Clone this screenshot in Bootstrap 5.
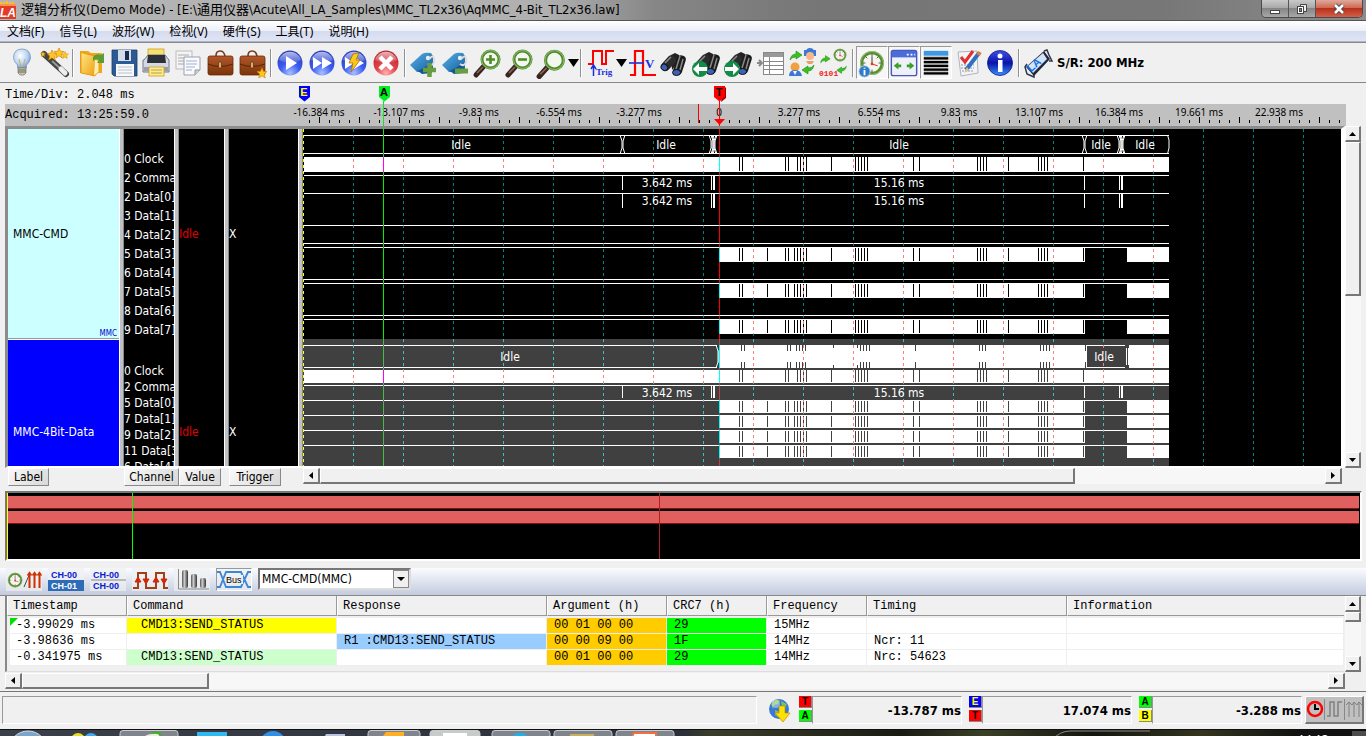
<!DOCTYPE html>
<html lang="zh-CN">
<head>
<meta charset="utf-8">
<meta name="viewport" content="width=device-width, initial-scale=1">
<title>逻辑分析仪(Demo Mode)</title>
<link href="https://cdn.jsdelivr.net/npm/bootstrap@5.3.0/dist/css/bootstrap.min.css" rel="stylesheet">
<style>
:root{--ui:"DejaVu Sans Condensed","Noto Sans","Noto Sans CJK SC",sans-serif;--mono:"Liberation Mono","Noto Sans CJK SC",monospace;--seg:"Noto Sans","Noto Sans CJK SC",sans-serif}
body{background:#f0f0f0;color:#000;font:12px/16px var(--ui);overflow:hidden}
button{font:inherit;color:inherit;padding:0;border:0;background:none}
svg{display:block;flex:none}
/* window frame */
.titlebar{height:21px;background:linear-gradient(90deg,#b4b4b4 0,#b0b0b0 40%,#868686 48%,#767676 60%,#777 85%,#8c8c8c 100%);border-bottom:1px solid #555;font:13px/20px var(--ui)}
.winbtns{height:18px;border:1px solid #4a4a4a;border-top:0;border-radius:0 0 5px 5px;overflow:hidden;margin-right:3px}
.winbtns button{background:linear-gradient(#c9c9c9,#a5a5a5 50%,#858585 50%,#a8a8a8);border-right:1px solid #555;width:27px}
.winbtns .closebtn{width:46px;border:0;background:linear-gradient(#e0a99b,#cf6a55 45%,#b8301a 50%,#d4604a)}
.menubar{height:21px;background:linear-gradient(#fdfdfe,#eef1f8 45%,#d5dcef 50%,#dfe5f5);border-top:1px solid #fff;border-bottom:1px solid #b0b4c4;gap:15px;padding-left:7px;font-family:var(--seg)}
.menubar a{color:#000;text-decoration:none}
.tools{height:41px;border-top:1px solid #888;border-bottom:1px solid #888;padding-left:6px}
.tools button{width:32px;height:34px;display:flex;align-items:center;justify-content:center}
.tools .drop{width:10px}
.tools .pressed{border:1px solid #999;border-right-color:#fff;border-bottom-color:#fff;background:#f6f6f6;height:33px}
.vsep{width:6px;height:28px;background:linear-gradient(90deg,transparent 2px,#909090 2px,#909090 3px,#fff 3px,#fff 4px,transparent 4px)}
.rate{font:bold 13px/16px var(--ui);padding-left:3px}
/* ruler */
.ruler{height:43px;padding-left:5px}
.infobox{width:280px;font:12px/20px var(--mono)}
.infobox div+div{background:#c0c0c0;height:22px;line-height:22px}
.infobox div:first-child{height:21px;line-height:25px}
.scale-host{flex:1;overflow:hidden;margin-right:20px;background:linear-gradient(#f0f0f0 21px,#c0c0c0 21px)}
/* waveform */
.viewer{margin-left:5px;margin-right:5px}
.wave-frame{flex:1;min-width:0;border:3px solid #8c8c8c;border-right:4px solid #fff;border-bottom:2px solid #fff;height:342px;background:#000;overflow:hidden}
.split{width:5px;background:linear-gradient(90deg,#fff 1px,#c0c0c0 1px,#c0c0c0 4px,#888 4px);flex:none}
.sect1{height:210px}
.sect2{height:184px;margin-top:1px}
.wcol{background:#000;color:#fff;flex:none;overflow:hidden}
.w-label{width:111px;background:#fff}
.w-chan{width:50px}.w-val{width:45px}.w-trig{width:69px}
.w-label>div{display:flex;align-items:center;padding-left:5px;position:relative}
.w-label .sect1{background:#cff;color:#000;border-bottom:1px solid #999}
.w-label .sect2{background:#00f;color:#fff}
.kind{position:absolute;right:2px;bottom:0;font-size:8px;line-height:8px;color:#00c}
.w-chan div div{white-space:nowrap}
.w-chan .sect1{padding-top:21px;line-height:19px}
.w-chan .sect2{padding-top:23px;line-height:16px}
.w-val .sect1,.w-val .sect2,.w-trig .sect1,.w-trig .sect2{display:flex;align-items:center}
.w-val{color:#e00000}
.wave-host{flex:1;overflow:hidden;min-width:0}
.hbtns{height:18px;margin-left:8px;margin-right:24px}
.hbtns .tab3d{border:1px solid #fff;border-right-color:#888;border-bottom-color:#888;background:linear-gradient(135deg,#f8f8f8,#d8d8d8);height:18px;line-height:15px}
.slot{flex:none}
/* scroll bars */
.sb{background:#f7f7f7;display:flex;flex:none}
.sb button,.sb .thumb{border:1px solid #fff;border-right:2px solid #777;border-bottom:2px solid #777;background:#f0f0f0;flex:none;display:flex;align-items:center;justify-content:center}
.sb-v{width:16px;flex-direction:column}
.sb-v button{height:16px;width:16px}
.sb-v .thumb{width:16px}
.sb-h{height:16px}
.sb-h button{width:17px;height:16px}
.sb-h .thumb{height:16px}
.rest{flex:1}
/* overview */
.overview{margin:5px 4px 0 5px;border:2px solid #777;border-right-color:#fff;border-bottom-color:#fff;height:70px;background:#000;position:relative;padding:3px 1px 0 1px}
.ovbar{height:13px;background:#e06060;border-bottom:1px solid #8b1010;margin-bottom:2px}
.ovline{position:absolute;top:0;bottom:0;width:1px}
/* decode strip */
.strip{margin-top:7px;height:28px;background:linear-gradient(#fafcff,#e4e8f2 40%,#c3cbdd);padding-left:6px;gap:6px;border-bottom:1px solid #888}
.strip button{width:36px;height:23px;display:flex;align-items:center;background:#f0f0f0b0}
.strip .pressed{border:1px solid #999;border-right-color:#fff;border-bottom-color:#fff}
.cbx{position:relative;width:153px}
.cbx select{appearance:none;width:153px;height:22px;border:2px solid #777;border-right-color:#ddd;border-bottom-color:#ddd;background:#fff;border-radius:0;padding:0 0 0 2px;font:12px/16px var(--ui);color:#000}
.cbx svg{position:absolute;right:2px;top:2px;pointer-events:none}
.grid-wrap{margin-left:5px;margin-right:5px}
.grid-frame{flex:1;min-width:0;height:76px;border-left:2px solid #888;border-bottom:1px solid #ddd;margin-right:1px;overflow:hidden}
.dtab{width:100%;table-layout:fixed;border-collapse:separate;border-spacing:0;font:12px/15px var(--mono);white-space:nowrap}
.dtab th{font-weight:400;height:20px;border-right:1px solid #999;border-left:1px solid #fff;border-bottom:1px solid #999;padding:2px 0 0 5px;text-align:left;background:#f0f0f0}
.dtab td{height:16px;padding:0 0 0 7px;background:#fff;border-right:1px solid #eee;border-bottom:1px solid #eee;line-height:15px}
.dtab td:first-child{border-left:3px solid #f0f0f0;padding-left:6px;position:relative}
.dtab th:last-child{border-right:0}
.dtab tbody tr:first-child td{border-top:2px solid #f0f0f0}
.dtab .cy{background:#ff0;padding-left:14px}.dtab .cg{background:#cfc;padding-left:14px}
.dtab .cb{background:#9cf}.dtab .co{background:#fc0}.dtab .cl{background:#0f0}
.flag::before{content:"";position:absolute;left:0;top:0;border-top:8px solid #00e000;border-right:8px solid transparent}
/* status bar */
.status{margin-top:2px;border-top:1px solid #777;height:38px;padding:4px 2px 4px 2px}
.pane{border:1px solid #999;border-right-color:#fff;border-bottom-color:#fff;height:28px;font:bold 13px/28px var(--ui);text-align:right}
.w-pane{width:150px}
.duo{width:13px;font:bold 10px/12px "Liberation Sans",sans-serif;text-align:center}
.pane+.duo{margin-left:7px}
.duo div{height:12px;border-right:1px solid #888;border-bottom:1px solid #888}
.duo div+div{margin-top:2px}
.modes{background:#c0c0c0;border:1px solid #fff;border-right:2px solid #777;border-bottom:2px solid #777;width:59px;height:28px;margin-left:3px}
.taskbar{flex:1;min-height:0;overflow:hidden;background:linear-gradient(90deg,#3a3f4a,#2b2f38 50%,#3b3d2a 52%,#1a1a14 66%,#3a4026 72%,#14140f 80%,#33351f 88%,#111 95%);border-top:1px solid #111}
</style>
<script src="https://cdn.jsdelivr.net/npm/bootstrap@5.3.0/dist/js/bootstrap.bundle.min.js"></script>
</head>
<body class="d-flex flex-column vh-100">
<svg class="position-absolute" width="0" height="0" aria-hidden="true">
<defs>
<radialGradient id="gBlue" cx=".5" cy=".9" r=".9"><stop offset="0" stop-color="#a8c0ff"/><stop offset=".45" stop-color="#3c5cf0"/><stop offset="1" stop-color="#2a3cb8"/></radialGradient>
<radialGradient id="gRed" cx=".5" cy=".9" r=".9"><stop offset="0" stop-color="#ffb0b0"/><stop offset=".45" stop-color="#e04048"/><stop offset="1" stop-color="#b82430"/></radialGradient>
<linearGradient id="gGloss" x2="0" y2="1"><stop offset="0" stop-color="#fff" stop-opacity=".65"/><stop offset="1" stop-color="#fff" stop-opacity=".1"/></linearGradient>
<linearGradient id="gTag" x2="1" y2="1"><stop offset="0" stop-color="#5ab0ea"/><stop offset="1" stop-color="#14609c"/></linearGradient>
<linearGradient id="gBrown" x2="0" y2="1"><stop offset="0" stop-color="#b0592c"/><stop offset="1" stop-color="#7c3208"/></linearGradient>
<linearGradient id="gGold" x2="1" y2="1"><stop offset="0" stop-color="#ffe88a"/><stop offset="1" stop-color="#f0a010"/></linearGradient>
<linearGradient id="gInfo" x2="0" y2="1"><stop offset="0" stop-color="#4050e8"/><stop offset=".5" stop-color="#0a14a8"/><stop offset="1" stop-color="#3a90ff"/></linearGradient>
<radialGradient id="gBulb" cx=".4" cy=".35" r=".7"><stop offset="0" stop-color="#fff"/><stop offset=".6" stop-color="#b8d4f4"/><stop offset="1" stop-color="#6c92cc"/></radialGradient>
<linearGradient id="gCyl"><stop offset="0" stop-color="#555"/><stop offset=".4" stop-color="#ccc"/><stop offset="1" stop-color="#333"/></linearGradient>
<g id="bag"><path d="M12 9Q12 4 16 4T21 9" fill="none" stroke="#7c3a18" stroke-width="1.6"/><rect x="4" y="9" width="25" height="19" rx="2" fill="url(#gBrown)" stroke="#6a2c08" stroke-width=".8"/><path d="M4 17Q16 22 29 17" fill="none" stroke="#5a2404"/><rect x="14.500" y="15" width="3" height="6" rx="1" fill="#d8a878" stroke="#502000" stroke-width=".6"/></g>
<g id="orb"><circle cx="16" cy="16" r="12.500"/><path d="M5 13A11.500 11.500 0 0 1 27 13Q16 19 5 13Z" fill="url(#gGloss)"/></g>
<g id="tagshape"><path d="M2 18L14 7Q17 5 23 6L25 9V24L22 25H9Z" fill="url(#gTag)"/><path d="M10 24L14 27 24 26V16Z" fill="#0f5a94"/><circle cx="20" cy="11" r="2.200" fill="#eee"/><path d="M21 12Q27 6 26 15Q24 20 20 17" fill="none" stroke="#ddd" stroke-width="2"/></g>
<g id="mag"><path d="M4 28L12 19" stroke="#3a2420" stroke-width="5" stroke-linecap="round"/><path d="M5 26L11 20" stroke="#8a6a60" stroke-width="1.500"/><circle cx="18.500" cy="12.500" r="8.500" fill="#f2f8ee" stroke="#4f8a2c" stroke-width="3"/><circle cx="18.500" cy="12.500" r="9" fill="none" stroke="#9cc878" stroke-width=".8"/></g>
<g id="bino"><path d="M13 8L17 6 21 8 22 13 14 23Z" fill="#222"/><rect x="6" y="7" width="9" height="17" rx="4" transform="rotate(42 10 16)" fill="#2c2c2c"/><rect x="17" y="8" width="9" height="20" rx="4" transform="rotate(18 21 18)" fill="#1c1c1c"/><path d="M13 10L7 16M22 9L18 22M25 12L22 23" stroke="#8a8a8a" stroke-width="1.500"/><ellipse cx="6.500" cy="20" rx="3.500" ry="3" fill="#3c62b8" stroke="#111" transform="rotate(40 6 20)"/><ellipse cx="18.500" cy="25.500" rx="4" ry="3" fill="#3c62b8" stroke="#111"/></g>
<g id="clockface"><circle cx="16" cy="16" r="11" fill="#f6f6f0" stroke="#5a8e34" stroke-width="3.500"/><circle cx="16" cy="16" r="12.300" fill="none" stroke="#a4cc80" stroke-width=".8"/><path d="M16 6V9M16 23V26M6 16H9M23 16H26M9 9L11 11M23 9L21 11" stroke="#555"/><path d="M16 17V9" stroke="#333"/><path d="M16 17L22 19" stroke="#d22"/><circle cx="16" cy="17" r="1.500" fill="#e33"/></g>
<path id="arrG" d="M2 11Q3 5 8 5V2L14 6L8 10V8Q4 8 2 11Z" fill="#3cc020" stroke="#1f8a10" stroke-width=".6"/>
<path id="star5" d="M0-5L1.500-1.600 5-1.500 2.300 1 3.200 5 0 2.800-3.200 5-2.300 1-5-1.500-1.500-1.600Z" fill="#ffc820" stroke="#d88800" stroke-width=".7"/>
</defs></svg>

<header class="titlebar d-flex align-items-center flex-shrink-0">
 <svg width="17" height="18" viewBox="0 0 17 18"><rect x="0" y="3" width="16" height="15" fill="#e43a28"/><path d="M1 3V1M4 3V1M7 3V0M10 3V1M13 3V1" stroke="#ffc020" stroke-width="2"/><rect x="0" y="3" width="16" height="2" fill="#ff9050"/><text x="0" y="16" font-family="Liberation Sans" font-size="12" font-weight="bold" font-style="italic" fill="#fff">LA</text></svg>
 <span class="ms-1 text-nowrap">逻辑分析仪(Demo Mode) - [E:\通用仪器\Acute\All_LA_Samples\MMC_TL2x36\AqMMC_4-Bit_TL2x36.law]</span>
 <div class="winbtns d-flex ms-auto align-self-start">
  <button aria-label="Minimize"><svg class="mx-auto" width="12" height="14"><rect x="1.500" y="8.500" width="9" height="3" fill="#fff" stroke="#444"/></svg></button>
  <button aria-label="Restore"><svg class="mx-auto" width="14" height="14"><path d="M5.500 2.500H11.500V9.500H5.500Z" fill="#eee" stroke="#444"/><rect x="2.500" y="4.500" width="6" height="7" fill="#fff" stroke="#444"/><rect x="4.500" y="6.500" width="2" height="3" fill="#888" stroke="#444"/></svg></button>
  <button class="closebtn" aria-label="Close"><svg class="mx-auto" width="14" height="14" viewBox="0 0 14 14"><path d="M3 3L11 11M11 3L3 11" stroke="#444" stroke-width="4.500"/><path d="M3 3L11 11M11 3L3 11" stroke="#fff" stroke-width="2.600"/></svg></button>
 </div>
</header>
<nav class="menubar d-flex align-items-center flex-shrink-0"><a href="#">文档(F)</a><a href="#">信号(L)</a><a href="#">波形(W)</a><a href="#">检视(V)</a><a href="#">硬件(S)</a><a href="#">工具(T)</a><a href="#">说明(H)</a></nav>

<div class="tools d-flex align-items-center flex-shrink-0" id="tools"></div>

<div class="ruler d-flex flex-shrink-0">
 <div class="infobox flex-shrink-0"><div>Time/Div: 2.048 ms</div><div>Acquired: 13:25:59.0</div></div>
 <div class="scale-host" id="scale"></div>
</div>

<main class="viewer d-flex flex-shrink-0">
 <div class="wave-frame d-flex">
  <div class="wcol w-label"><div class="sect1">MMC-CMD<span class="kind">MMC</span></div><div class="sect2">MMC-4Bit-Data</div></div>
  <div class="split"></div>
  <div class="wcol w-chan"><div class="sect1"><div>0 Clock</div><div>2 Command</div><div>2 Data[0]</div><div>3 Data[1]</div><div>4 Data[2]</div><div>5 Data[3]</div><div>6 Data[4]</div><div>7 Data[5]</div><div>8 Data[6]</div><div>9 Data[7]</div></div>
  <div class="sect2"><div>0 Clock</div><div>2 Command</div><div>5 Data[0]</div><div>7 Data[1]</div><div>9 Data[2]</div><div>11 Data[3]</div><div>6 Data[4]</div></div></div>
  <div class="split"></div>
  <div class="wcol w-val"><div class="sect1">Idle</div><div class="sect2">Idle</div></div>
  <div class="split"></div>
  <div class="wcol w-trig"><div class="sect1">X</div><div class="sect2">X</div></div>
  <div class="split"></div>
  <div class="wave-host" id="wave"></div>
 </div>
 <div class="sb sb-v"><button aria-label="Up"><svg width="7" height="4"><path d="M0 4L3.500 0 7 4Z"/></svg></button><div class="thumb" style="height:154px"></div><div class="rest"></div><button aria-label="Down"><svg width="7" height="4"><path d="M0 0L3.500 4 7 0Z"/></svg></button></div>
</main>
<div class="hbtns d-flex flex-shrink-0">
 <div class="slot" style="width:116px"><button class="tab3d" style="width:41px">Label</button></div>
 <button class="tab3d" style="width:55px">Channel</button>
 <div class="slot" style="width:50px"><button class="tab3d" style="width:42px">Value</button></div>
 <div class="slot" style="width:74px"><button class="tab3d" style="width:52px">Trigger</button></div>
 <div class="sb sb-h flex-grow-1"><button aria-label="Left"><svg width="4" height="7"><path d="M4 0L0 3.500 4 7Z"/></svg></button><div class="thumb" style="width:755px"></div><div class="rest"></div><button aria-label="Right"><svg width="4" height="7"><path d="M0 0L4 3.500 0 7Z"/></svg></button></div>
</div>

<section class="overview flex-shrink-0">
 <div class="ovbar"></div><div class="ovbar"></div>
 <div class="ovline" style="left:0;background:#ff0"></div>
 <div class="ovline" style="left:9.26%;background:#0f0"></div>
 <div class="ovline" style="left:48.2%;background:#b02020"></div>
</section>

<div class="strip d-flex align-items-start flex-shrink-0">
 <button aria-label="Clock and edges"><svg width="36" height="23" viewBox="0 0 36 23"><use href="#clockface" transform="translate(0 3) scale(.57)"/><path d="M24 5L18 19" stroke="#444"/><path d="M23.500 20V6M28.500 20V6M33.500 20V6" stroke="#d03000" stroke-width="2"/><path d="M21.500 7.500L23.500 4.500 25.500 7.500M26.500 7.500L28.500 4.500 30.500 7.500M31.500 7.500L33.500 4.500 35.500 7.500" fill="none" stroke="#d03000" stroke-width="1.500"/></svg></button>
 <button aria-label="Channel select"><svg width="36" height="23" viewBox="0 0 36 23"><rect y="12" width="36" height="11" fill="#2f6cb8"/><text x="3" y="10" font-family="Liberation Sans" font-size="9" font-weight="bold" fill="#0a1ad0">CH-00</text><text x="3" y="21" font-family="Liberation Sans" font-size="9" font-weight="bold" fill="#fff">CH-01</text></svg></button>
 <button aria-label="Channel compare"><svg width="36" height="23" viewBox="0 0 36 23"><path d="M1 12H36" stroke="#888"/><text x="3" y="10" font-family="Liberation Sans" font-size="9" font-weight="bold" fill="#0a1ad0">CH-00</text><text x="3" y="21" font-family="Liberation Sans" font-size="9" font-weight="bold" fill="#0a1ad0">CH-00</text></svg></button>
 <button aria-label="Edges"><svg width="36" height="23" viewBox="0 0 36 23"><path d="M1 20H6V5H14V20H24V5H32V20H36" fill="none" stroke="#a04018" stroke-width="2"/><path d="M3 14L6 9 9 14ZM21 14L24 9 27 14ZM11 11L14 16 17 11ZM29 11L32 16 35 11Z" fill="#d02808" stroke="#d02808"/></svg></button>
 <button aria-label="Statistics"><svg width="36" height="23" viewBox="0 0 36 23"><path d="M4.500 1V21H35" stroke="#888" fill="none"/><rect x="8" y="2" width="6" height="18" rx="2" fill="url(#gCyl)"/><rect x="17" y="6" width="6" height="14" rx="2" fill="url(#gCyl)"/><rect x="26" y="10" width="6" height="10" rx="2" fill="url(#gCyl)"/></svg></button>
 <button class="pressed" aria-label="Bus"><svg width="34" height="21" viewBox="0 0 34 21"><path d="M0 3H3L9 18H24L31 3H34M0 18H3L9 3H24L31 18H34" fill="none" stroke="#3a86d8" stroke-width="1.800"/><rect x="9" y="6" width="17" height="9" fill="#f0f0f0"/><text x="9" y="14" font-family="Liberation Sans" font-size="9" fill="#000">Bus</text></svg></button>
 <div class="cbx"><select aria-label="Bus"><option>MMC-CMD(MMC)</option></select><svg width="16" height="18"><rect x=".5" y=".5" width="15" height="17" fill="#f0f0f0" stroke="#888"/><path d="M4 7H12L8 11Z"/></svg></div>
</div>

<div class="grid-wrap d-flex flex-shrink-0">
 <div class="grid-frame">
 <table class="dtab"><colgroup><col style="width:120px"><col style="width:210px"><col style="width:210px"><col style="width:120px"><col style="width:100px"><col style="width:100px"><col style="width:200px"><col></colgroup>
 <thead><tr><th>Timestamp</th><th>Command</th><th>Response</th><th>Argument (h)</th><th>CRC7 (h)</th><th>Frequency</th><th>Timing</th><th>Information</th></tr></thead>
 <tbody>
 <tr><td class="flag">-3.99029 ms</td><td class="cy">CMD13:SEND_STATUS</td><td></td><td class="co">00 01 00 00</td><td class="cl">29</td><td>15MHz</td><td></td><td></td></tr>
 <tr><td>-3.98636 ms</td><td></td><td class="cb">R1 :CMD13:SEND_STATUS</td><td class="co">00 00 09 00</td><td class="cl">1F</td><td>14MHz</td><td>Ncr: 11</td><td></td></tr>
 <tr><td>-0.341975 ms</td><td class="cg">CMD13:SEND_STATUS</td><td></td><td class="co">00 01 00 00</td><td class="cl">29</td><td>14MHz</td><td>Nrc: 54623</td><td></td></tr>
 </tbody></table>
 </div>
 <div class="sb sb-v"><button aria-label="Up"><svg width="7" height="4"><path d="M0 4L3.500 0 7 4Z"/></svg></button><div class="thumb" style="height:10px"></div><div class="rest"></div><button aria-label="Down"><svg width="7" height="4"><path d="M0 0L3.500 4 7 0Z"/></svg></button></div>
</div>
<div class="sb sb-h" style="margin:1px 21px 0 5px"><button aria-label="Left"><svg width="4" height="7"><path d="M4 0L0 3.500 4 7Z"/></svg></button><div class="thumb" style="width:187px"></div><div class="rest"></div><button aria-label="Right"><svg width="4" height="7"><path d="M0 0L4 3.500 0 7Z"/></svg></button></div>

<footer class="status d-flex flex-shrink-0">
 <div class="pane flex-grow-1"></div>
 <svg class="mx-2" width="26" height="28" viewBox="0 0 26 28"><circle cx="14" cy="13" r="10" fill="#3a78d8"/><path d="M6 8Q10 3 15 4L13 8 9 9 8 13ZM16 5L22 8 20 12 17 11ZM10 14L15 16 13 21 10 19Z" fill="#7cc060"/><circle cx="11" cy="8" r="4" fill="#fff" opacity=".4"/><path d="M14 10H20V17H25L18 26 10 17H14Z" fill="#ffe000" stroke="#b89000" stroke-width=".7"/></svg>
 <div class="duo"><div style="background:#f00">T</div><div style="background:#0f0">A</div></div><div class="pane w-pane">-13.787 ms</div>
 <div class="duo"><div style="background:#00f;color:#ff0">E</div><div style="background:#f00">T</div></div><div class="pane w-pane">17.074 ms</div>
 <div class="duo"><div style="background:#0f0">A</div><div style="background:#ff0">B</div></div><div class="pane w-pane">-3.288 ms</div>
 <div class="modes"><svg width="56" height="25" viewBox="0 0 56 25"><circle cx="9" cy="12" r="7" fill="#c0c0c0" stroke="#f00" stroke-width="2.500"/><path d="M9 7V12H13" stroke="#000" stroke-width="2" fill="none"/><path d="M18.500 2V23M38.500 2V23" stroke="#888"/><path d="M21 19H24V5H28V19H32V5H36" fill="none" stroke="#808080" stroke-width="1.500"/><path d="M43 20V5M48 20V5M53 20V5M40 8L43 5 46 8 48 5 51 8 53 5 56 8" fill="none" stroke="#808080"/></svg></div>
</footer>
<div class="taskbar"><svg width="1366" height="40" viewBox="0 0 1366 40">
<g fill="#80848c" stroke="#c8ccd0"><rect x="120" y=".5" width="58" height="39" rx="3"/><rect x="368" y=".5" width="52" height="39" rx="3"/><rect x="430" y=".5" width="50" height="39" rx="3" fill="#c8ccc8"/><rect x="492" y=".5" width="58" height="39" rx="3"/><rect x="554" y=".5" width="58" height="39" rx="3"/><rect x="616" y=".5" width="58" height="39" rx="3"/></g>
<circle cx="28" cy="20" r="19" fill="#7aa4c8" stroke="#dde"/><circle cx="78" cy="10" r="7" fill="#e8e020"/><circle cx="91" cy="10" r="7" fill="#40a8f0"/><path d="M140 14Q142 2 160 4L156 14Z" fill="#e8f0e0"/><path d="M152 3Q160 1 162 9" stroke="#40b020" stroke-width="2" fill="none"/><rect x="197" y="2" width="30" height="20" fill="#30b8f0"/><circle cx="273" cy="14" r="13" fill="#3090e8"/><path d="M322 12L326 4H345V20H322Z" fill="#b8c4e4"/><path d="M380 10L386 2H404V20H380Z" fill="#ffb020"/><rect x="443" y="3" width="24" height="20" fill="#fff"/><circle cx="520" cy="14" r="11" fill="#18b4f0"/><rect x="570" y="4" width="24" height="20" fill="#c8b060"/><path d="M630 10L634 3H656V20H630Z" fill="#fff" stroke="#f07040" stroke-width="2"/><path d="M1052 10Q1060 1 1070 1H1150" stroke="#888" fill="none"/><text x="1298" y="14" font-family="Noto Sans" font-size="12" fill="#fff">14:13</text><rect x="1352" y="1" width="14" height="39" fill="#888" opacity=".5"/></svg></div>

<script>
/* ---- main tool bar ---- */
const use = (id, x) => `<use href="#${id}"${x ? ' ' + x : ''}/>`;
const icons = [
 ['Hint','<path d="M16 2Q24.500 2 24.500 11 24 15 20.500 18V21H11.500V18Q8 15 7.500 11 7.500 2 16 2Z" fill="url(#gBulb)" stroke="#8098b8" stroke-width=".8"/><path d="M13 12L15 20M19 12L17 20" stroke="#c8b060"/><path d="M12 21H20V26L18 28H14L12 26Z" fill="#c8c8a0" stroke="#777" stroke-width=".7"/><path d="M12 23H20M12 25H20" stroke="#666"/>'],
 ['Wizard','<path d="M6 7L28 27" stroke="#444" stroke-width="6" stroke-linecap="round"/><path d="M14 14L25 24" stroke="#999" stroke-width="2"/><path d="M23 22L27 26" stroke="#eee" stroke-width="5" stroke-linecap="round"/>'+use('star5','transform="translate(14 8)"')+use('star5','transform="translate(21 6)"')+use('star5','transform="translate(27 8) scale(.7)"')+use('star5','transform="translate(5 7) scale(.5)"')],
 '|',
 ['Open','<path d="M4 4H12L15 6H26V26H4Z" fill="#f0a818"/><path d="M7 6L19 9V29L5 26V5Z" fill="url(#gGold)" stroke="#e09000" stroke-width=".8"/><path d="M19 12L23 14V25L18 29" fill="#fff0b0" stroke="#e8a020"/><path d="M17 10Q20 6 25 8L28 6V16H21L23 13Q20 11 17 14Z" fill="#5c9c38"/>'],
 ['Save','<path d="M4 3H29V29H6L4 27Z" fill="#2c5a94" stroke="#1c3c6c" stroke-width=".8"/><rect x="10" y="3" width="13" height="11" fill="#d4dce8"/><rect x="17" y="4" width="4" height="9" fill="#1c2c50"/><rect x="8" y="17" width="18" height="12" fill="#f8f8f8"/><path d="M10 20H24M10 23H24M10 26H24" stroke="#b8c0d0"/>'],
 ['Print','<rect x="8" y="2" width="16" height="8" fill="#f8e070" stroke="#c8a020" stroke-width=".8"/><path d="M4 13L8 8H25L29 13V25H3V13Z" fill="#d4d8e4" stroke="#707888"/><path d="M8 8H25L26 16H7Z" fill="#2c3038"/><path d="M4 20H28V24H4Z" fill="#989eac"/><rect x="9" y="20" width="15" height="9" fill="#fcec90" stroke="#c8a020" stroke-width=".8"/><path d="M11 23H22M11 26H22" stroke="#c0a040"/>'],
 ['Copy','<rect x="4" y="4" width="16" height="18" fill="#f4f4f4" stroke="#bbb"/><path d="M6 8H17M6 11H17M6 14H14M6 17H14" stroke="#aaa"/><path d="M12 10H28V23L23 28H12Z" fill="#fafafa" stroke="#9aa0b8"/><path d="M14 14H25M14 17H25M14 20H23M14 23H20" stroke="#a0b0d8"/><path d="M28 23H23V28" fill="#ccc" stroke="#999"/>'],
 ['Bag',use('bag')],
 ['Bag favourite',use('bag')+use('star5','transform="translate(26 26)"')],
 '|',
 ['Run',use('orb','fill="url(#gBlue)"')+'<path d="M12 9L23 16 12 23Z" fill="#fff"/>'],
 ['Repeat run',use('orb','fill="url(#gBlue)"')+'<path d="M7 10L16 16 7 22ZM16 10L26 16 16 22Z" fill="#fff"/>'],
 ['Fast run',use('orb','fill="url(#gBlue)"')+'<path d="M7 10L16 16 7 22ZM16 10L26 16 16 22Z" fill="#fff"/><path d="M15 7L21 6 18 13H22L13 25 15 16H11Z" fill="#ffc818" stroke="#a87000" stroke-width=".8"/>'],
 ['Stop',use('orb','fill="url(#gRed)"')+'<path d="M10 10L22 22M22 10L10 22" stroke="#fff" stroke-width="4.500"/>'],
 '|',
 ['Add tag',use('tagshape')+'<path d="M15 23H28M21.500 16V30" stroke="#6a9c40" stroke-width="4.500"/>'],
 ['Remove tag',use('tagshape')+'<path d="M15 24H28" stroke="#6a9c40" stroke-width="5"/>'],
 ['Zoom in',use('mag')+'<path d="M14 12.500H23M18.500 8V17" stroke="#4f8a2c" stroke-width="2.600"/>'],
 ['Zoom out',use('mag')+'<path d="M14 12.500H23" stroke="#4f8a2c" stroke-width="2.600"/>'],
 ['Zoom',use('mag','transform="translate(-1 0) scale(1.05)"')], 'v',
 '|',
 ['Trigger','<path d="M4 17H9V4H18V17H22V4H30" fill="none" stroke="#f00" stroke-width="2"/><path d="M9.500 29V19M7 22L9.500 18 12 22" stroke="#1830e0" fill="none" stroke-width="1.500"/><text x="12" y="28" font-family="Liberation Serif" font-size="9" font-weight="bold" fill="#1830e0">Trig</text>'], 'v',
 ['Threshold','<path d="M4 28H9V4H17V28H30" fill="none" stroke="#f00" stroke-width="2.200"/><path d="M3 16H18" stroke="#1830e0" stroke-width="1.600"/><text x="19" y="21" font-family="Liberation Serif" font-size="13" font-weight="bold" fill="#1830e0">V</text>'],
 ['Find',use('bino')],
 ['Find previous',use('bino','transform="translate(2 -1)"')+'<circle cx="10" cy="22" r="8" fill="#148a48"/><path d="M3 22L9 16V20H17V24H9V28Z" fill="#fff"/>'],
 ['Find next',use('bino','transform="translate(2 -1)"')+'<circle cx="10" cy="22" r="8" fill="#148a48"/><path d="M17 22L11 16V20H3V24H11V28Z" fill="#fff"/>'],
 ['Report','<rect x="9.500" y="5.500" width="20" height="22" fill="#fff" stroke="#888"/><rect x="10" y="6" width="19" height="4" fill="#999"/><path d="M10 14.500H29M10 18.500H29M10 22.500H29M15.500 10V27" stroke="#888"/><path d="M3 16H7M5 13L8 16 5 19" stroke="#888" fill="none" stroke-width="2"/>'],
 ['Users','<circle cx="24" cy="5" r="4" fill="#3c78d8"/><path d="M18 3H30V9H18Z" fill="#3c78d8"/><circle cx="24" cy="9" r="4" fill="#f8b888"/><path d="M20 14H28L26 17H22Z" fill="#e8a070"/><circle cx="9" cy="20" r="4.500" fill="#f0a040"/><path d="M3 29Q3 23 9 23T16 29Z" fill="#3c78d8"/><path d="M7 24H11L9 28Z" fill="#fff"/>'+use('arrG','transform="translate(2 2)"')+use('arrG','transform="rotate(180 15 14.500)"')],
 ['Convert',use('arrG','transform="translate(1 7) scale(.8)"')+use('clockface','transform="translate(14 0) scale(.5)"')+use('arrG','transform="translate(30 28) rotate(180) scale(.8)"')+'<text x="1" y="29" font-family="Liberation Mono" font-size="8" font-weight="bold" fill="#f02020">0101</text>'],
 '|',
 ['Time info',use('clockface')+'<circle cx="8" cy="25" r="6" fill="#2c7cc8" stroke="#bcd"/><path d="M8 21V22M8 23.500V29" stroke="#fff" stroke-width="2"/>',1],
 ['Fit window','<rect x="2.500" y="2.500" width="27" height="27" rx="2" fill="#eef0fa" stroke="#4858b8" stroke-width="1.500"/><rect x="3" y="3" width="26" height="7" fill="#4a6cd8"/><path d="M19 7H21M23 7H25M27 7H28" stroke="#fff" stroke-width="2"/><path d="M5 19L10 15V17.500H13V20.500H10V23ZM27 19L22 15V17.500H19V20.500H22V23Z" fill="#3ca028"/>',1],
 ['List view','<rect x="3" y="4" width="26" height="25" fill="#c8c8c8"/><rect x="3" y="3" width="26" height="5" fill="#3c98e8"/><path d="M3 11H29M3 15H29M3 19H29M3 23H29M3 27H29" stroke="#000" stroke-width="2.500"/>',1],
 ['Options','<path d="M6 5L25 4 26 26 9 29Z" fill="#f4f4f8" stroke="#b0b4c0"/><path d="M9 18H22M9 21H22M10 24H22M9 12H12" stroke="#8c98b8" stroke-dasharray="2 1"/><path d="M9 10L13 15 21 4" stroke="#e03030" stroke-width="3" fill="none"/><path d="M27 6L14 23" stroke="#3070c0" stroke-width="4"/><path d="M28 5L26 8" stroke="#e08040" stroke-width="4"/><path d="M15 20L12 26 17 23Z" fill="#e8c080"/>'],
 ['About','<circle cx="16" cy="16" r="12.500" fill="url(#gInfo)" stroke="#0c1880" stroke-width=".8"/><circle cx="16" cy="9" r="2.500" fill="#fff"/><rect x="14" y="13" width="4.500" height="12" fill="#fff"/>'],
 '|',
 ['Device','<path d="M4 20L22 4 28 12 12 29Z" fill="#202840"/><path d="M6 19L21 6 25 12 11 26Z" fill="#d4e4f8"/><path d="M5 17L3 20 5 27 12 30 12 28M22 4L25 3 27 8 30 14 27 14" stroke="#303848" fill="none" stroke-width="1.500"/><text x="7" y="24" transform="rotate(-42 10 22)" font-family="Liberation Sans" font-size="11" font-weight="bold" fill="#1070e0">LA</text>']
];
document.getElementById('tools').innerHTML = icons.map(i =>
 i === '|' ? '<div class="vsep"></div>' :
 i === 'v' ? '<button class="drop" aria-label="More"><svg width="11" height="10"><path d="M0 1H11L5.500 9Z"/></svg></button>' :
 `<button class="${i[2] ? 'pressed' : ''}" aria-label="${i[0]}"><svg width="${i[2] ? 30 : 32}" height="${i[2] ? 30 : 32}" viewBox="0 0 32 32">${i[1]}</svg></button>`
).join('') + '<span class="rate">S/R: 200 MHz</span>';

/* ---- time scale; x is measured from the left edge of the plot ---- */
const T0 = 416, A0 = 80;
const r = (x, y, w, h, c) => `<rect x="${x}" y="${y}" width="${w}" height="${h}" fill="${c}"/>`;
const txt = (x, y, s, c, size, fam) => `<text x="${x}" y="${y}" text-anchor="middle" font-family="${fam}" font-size="${size}" fill="${c}">${s}</text>`;
const uiFont = 'DejaVu Sans Condensed, Noto Sans, sans-serif';
let s = '';
for (let x = 6, k = -41; x < 1040; x += 10, k++) s += r(x, k % 4 ? 37 : 34, 1, k % 4 ? 3 : 6, '#000');
['-16.384 ms','-13.107 ms','-9.83 ms','-6.554 ms','-3.277 ms','0','3.277 ms','6.554 ms','9.83 ms','13.107 ms','16.384 ms','19.661 ms','22.938 ms']
 .forEach((t, i) => s += txt(16 + 80 * i, 33, t, '#000', 10, 'Noto Sans, sans-serif'));
const flag = (x, fill, t, c) => `<path d="M${x-5} 3H${x+6}V14L${x+.5} 18.500 ${x-5} 14Z" fill="${fill}"/><text x="${x}" y="13" text-anchor="middle" font-family="Liberation Sans" font-size="11" font-weight="bold" fill="${c}">${t}</text>`;
s += flag(1, '#00f', 'E', '#ff0') + flag(A0 + 1, '#0e2', 'A', '#000') + r(A0, 18, 1, 25, '#0e2');
s += r(395, 21, 1, 19, '#f00') + `<path d="M${T0+5} 3L${T0+7} 5V15L${T0+2} 19Z" fill="#900"/>` + flag(T0, '#f00', 'T', '#000') + r(T0, 18, 1, 25, '#f00') + `<path d="M${T0-5} 36H${T0+6}L${T0+.5} 42Z" fill="#f00"/>`;
document.getElementById('scale').innerHTML = `<svg width="1060" height="43" viewBox="-18 0 1060 43">${s}</svg>`;

/* ---- waveforms ---- */
const END = 866, white = [], W = '#fff', G = '#404040';
const clk = [436,439,482,485,494,497,500,503,528,552,555,558,561,564,610,616,674,677,680,683,705,735,738,741,744,780];
const dat = clk.concat([464, 491]);
const fill = (x, y, w, h) => { white.push([x, y, w, h]); return r(x, y, w, h, W); };
const hline = (y, x = 1, e = END) => fill(x, y, e - x, 1);
const burst = (y, h, bg) => hline(y, 1, T0) + fill(T0, y, 782 - T0, h) + hline(y, 782, 824) + fill(824, y, END - 824, h) + dat.map(x => r(x, y + 1, 1, h - 2, bg)).join('');
const clock = (y, h, bg) => fill(1, y, END - 1, h) + clk.map(x => r(x, y, 1, h - 1, bg)).join('');
const pulses = (y, h) => hline(y) + [[319,1],[408,1],[410,2],[781,1],[816,1],[818,2]].map(p => fill(p[0], y, p[1], h)).join('') + txt(364, y + 12, '3.642 ms', W, 12, uiFont) + txt(596, y + 12, '15.16 ms', W, 12, uiFont);
const cross = (x, y, h) => `<path d="M${x-2} ${y}L${x} ${y+6}V${y+h-6}L${x-2} ${y+h}M${x+3} ${y}L${x+1} ${y+6}V${y+h-6}L${x+3} ${y+h}" stroke="#fff" fill="none"/>`;
let body = hline(6) + hline(24) + cross(319, 6, 19) + cross(408, 6, 19) + cross(410, 6, 19) + cross(411, 6, 19) + cross(781, 6, 19) + cross(816, 6, 19) + cross(818, 6, 19) + cross(819, 6, 19)
 + `<path d="M864.500 6L866 11V19L864.500 25" stroke="#fff" fill="none"/>`;
[158, 363, 596, 798, 842].forEach(x => body += txt(x, 20, 'Idle', W, 12, uiFont));
body += clock(28, 15, '#000') + pulses(46, 15) + pulses(64, 15) + hline(96) + hline(114) + burst(118, 15, '#000') + hline(150) + burst(154, 15, '#000') + hline(186) + burst(190, 15, '#000');
body += hline(216, 1, T0 - 2) + hline(238, 1, T0 - 2) + cross(T0 - 1, 216, 23) + fill(T0, 216, END - T0, 23);
const tk = [438,441,484,487,493,496,499,502,557,560,563,566,612,676,679,682,737,740,743,746,782];
tk.forEach(x => body += r(x, 216, 1, 6, G) + r(x, 233, 1, 6, G));
[530, 554].forEach(x => body += r(x, 216, 1, 3, G) + r(x, 236, 1, 3, G));
body += r(784, 217, 39, 21, G) + r(824, 217, 1, 21, G) + r(822, 216, 4, 3, G) + r(822, 236, 4, 3, G);
body += txt(207, 232, 'Idle', W, 12, uiFont) + txt(801, 232, 'Idle', W, 12, uiFont);
body += clock(241, 13, G) + pulses(256, 13) + [271, 286, 301, 316].map(y => burst(y, 13, G)).join('');
const dashes = c => { let o = ''; for (let x = 50; x < 1040; x += 50) o += `<path d="M${x + .5} 0V337" stroke="${c}" stroke-dasharray="3 3"/>`; return o; };
const lines = (d, a, t) => dashes(d) + r(A0, 0, 1, 337, a) + r(T0, 0, 1, 337, t);
document.getElementById('wave').innerHTML = `<svg width="1039" height="337"><defs><clipPath id="onWhite">${white.map(w => r(w[0], w[1], w[2], w[3], W)).join('')}</clipPath><clipPath id="onGrey">${r(0, 210, END, 127, W)}</clipPath></defs>`
 + r(0, 210, END, 127, G) + lines('#008080', '#00f000', '#f00') + `<g clip-path="url(#onGrey)">${lines('#40bfbf', '#40bf40', '#c04040')}</g>` + body
 + `<g clip-path="url(#onWhite)">${lines('#ff7f7f', '#f0f', '#0ff')}</g><path d="M.5 0V337" stroke="#ff0" stroke-dasharray="3 3"/></svg>`;
</script>
</body>
</html>
